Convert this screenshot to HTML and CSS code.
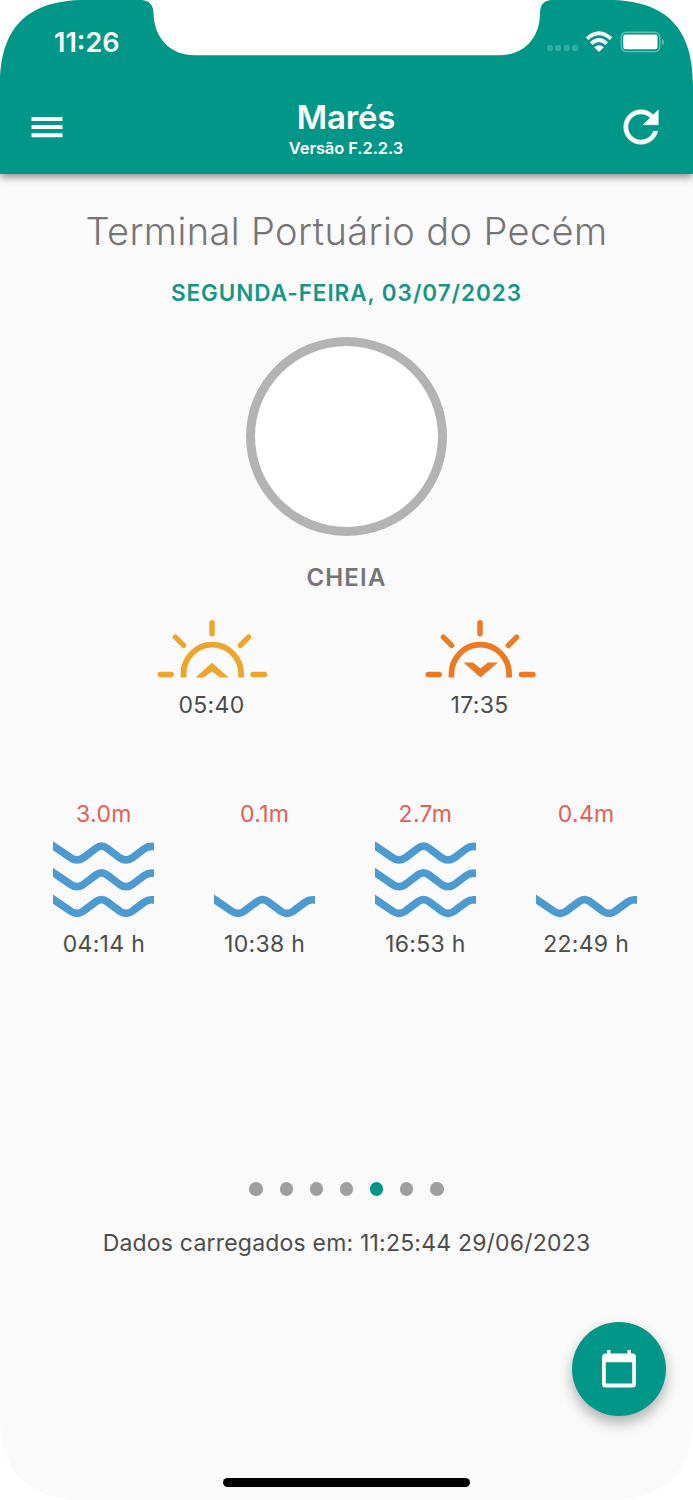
FILE: index.html
```html
<!DOCTYPE html>
<html lang="pt-BR">
<head>
    <meta charset="UTF-8">
    <meta name="viewport" content="width=device-width, initial-scale=1.0">
    <title>Marés</title>
    <link rel="stylesheet" href="styles.css">
</head>
<body>
    <!-- shared wave shape -->
    <svg class="defs" width="0" height="0">
        <defs>
            <path id="wave" d="M-4 2L18 17Q24 20.800 30 17L43 7.200Q48.500 3.200 54 7.200L67 17Q73 20.800 79 17L91 8Q97 3.600 104 6.500" fill="none" stroke="#4b9bd0" stroke-width="7.6"/>
        </defs>
    </svg>

    <div class="phone">
        <header class="app-header">
            <div class="status-bar">
                <span class="clock">11:26</span>
                <div class="status-icons">
                    <span class="signal"><i></i><i></i><i></i><i></i></span>
                    <svg class="wifi" width="28" height="22" viewBox="0 0 28 22">
                        <g fill="none" stroke="#fff" stroke-width="3.8">
                            <path d="M2 7.7Q14 -3.2 26 7.7"/>
                            <path d="M6.3 12.6Q14 5.6 21.7 12.6"/>
                        </g>
                        <path d="M9.2 16.2Q14 12.4 18.8 16.2L14 21Z" fill="#fff"/>
                    </svg>
                    <svg class="battery" width="46" height="22" viewBox="0 0 46 22">
                        <rect x="1.2" y="1.2" width="38.6" height="19.4" rx="5" fill="none" stroke="#66bdb4" stroke-width="1.4"/>
                        <rect x="3.2" y="3.5" width="34.3" height="14.8" rx="2.5" fill="#fff"/>
                        <path d="M42 7.5Q46 11 42 14.5Z" fill="#66bdb4"/>
                    </svg>
                </div>
            </div>
            <div class="toolbar">
                <svg class="menu-icon" width="32" height="22" viewBox="0 0 32 22">
                    <path d="M.5 .9h31v4H.5zM.5 9h31v4H.5zM.5 17.300h31v4H.5z" fill="#fff"/>
                </svg>
                <div class="titles">
                    <h1>Marés</h1>
                    <p class="version">Versão F.2.2.3</p>
                </div>
                <svg class="refresh-icon" width="52" height="52" viewBox="0 0 24 24">
                    <path d="M17.65 6.35C16.2 4.9 14.21 4 12 4c-4.42 0-7.99 3.58-7.99 8s3.57 8 7.99 8c3.73 0 6.84-2.55 7.73-6h-2.08c-.82 2.33-3.04 4-5.65 4-3.31 0-6-2.69-6-6s2.69-6 6-6c1.66 0 3.14.69 4.22 1.78L13 11h7V4l-2.35 2.35z" fill="#fff" stroke="#fff" stroke-width=".2"/>
                </svg>
            </div>
        </header>

        <main class="content">
            <h2 class="port">Terminal Portuário do Pecém</h2>
            <p class="date">SEGUNDA-FEIRA, 03/07/2023</p>
            <div class="moon"></div>
            <p class="moon-phase">CHEIA</p>

            <div class="sun-times">
                <div class="sun sunrise">
                    <svg width="112" height="60" viewBox="0 0 112 60">
                        <g fill="none" stroke="currentColor" stroke-width="5.4" stroke-linecap="round">
                            <path d="M56 3.6V14.8M19.4 18.2l8.2 8.2M92.6 18.2l-8.2 8.2M4.2 55.5h11M97 55.5h11.5"/>
                            <path d="M27.5 58.6V55A28.8 29.3 0 0 1 85.1 55V58.6" stroke-linecap="butt" stroke-width="5.8"/>
                        </g>
                        <path d="M39.5 58.6L56 43.8 72.8 58.6H64.3L56 52.500 47.500 58.6Z" fill="currentColor"/>
                    </svg>
                    <span>05:40</span>
                </div>
                <div class="sun sunset">
                    <svg width="112" height="60" viewBox="0 0 112 60">
                        <g fill="none" stroke="currentColor" stroke-width="5.4" stroke-linecap="round">
                            <path d="M56 3.6V14.8M19.4 18.2l8.2 8.2M92.6 18.2l-8.2 8.2M4.2 55.5h11M97.5 55.5h11.5"/>
                            <path d="M27.5 58.6V55A28.8 29.3 0 0 1 85.1 55V58.6" stroke-linecap="butt" stroke-width="5.8"/>
                        </g>
                        <path d="M39.5 43.5H49L56.5 49.6 64 43.5H74L56.5 58.6Z" fill="currentColor"/>
                    </svg>
                    <span>17:35</span>
                </div>
            </div>

            <div class="tides">
                <div class="tide">
                    <span class="height">3.0m</span>
                    <svg width="101" height="76" viewBox="0 0 101 76"><use href="#wave"/><use href="#wave" y="26.7"/><use href="#wave" y="53.4"/></svg>
                    <span class="hour">04:14 h</span>
                </div>
                <div class="tide">
                    <span class="height">0.1m</span>
                    <svg width="101" height="76" viewBox="0 0 101 76"><use href="#wave" y="53.4"/></svg>
                    <span class="hour">10:38 h</span>
                </div>
                <div class="tide">
                    <span class="height">2.7m</span>
                    <svg width="101" height="76" viewBox="0 0 101 76"><use href="#wave"/><use href="#wave" y="26.7"/><use href="#wave" y="53.4"/></svg>
                    <span class="hour">16:53 h</span>
                </div>
                <div class="tide">
                    <span class="height">0.4m</span>
                    <svg width="101" height="76" viewBox="0 0 101 76"><use href="#wave" y="53.4"/></svg>
                    <span class="hour">22:49 h</span>
                </div>
            </div>

            <div class="dots">
                <i></i><i></i><i></i><i></i><i class="active"></i><i></i><i></i>
            </div>
            <p class="loaded">Dados carregados em: 11:25:44 29/06/2023</p>
        </main>

        <button class="fab" aria-label="Calendário">
            <svg width="36" height="40" viewBox="0 0 36 40">
                <path fill="#fff" fill-rule="evenodd" d="M6 1h3.5v3.6h17V1H30v3.6h1.5A3.5 3.5 0 0 1 35 8v27a3.5 3.5 0 0 1-3.5 3.5h-27A3.5 3.5 0 0 1 1 35V8a3.5 3.5 0 0 1 3.5-3.4H6zM4.8 13.2v21.3h26.4V13.2z"/>
            </svg>
        </button>
        <div class="home-bar"></div>

        <!-- notch and rounded screen corners -->
        <svg class="bezel" width="693" height="1500" viewBox="0 0 693 1500">
            <path fill="#fff" d="M0 0H85C25 0 0 30 0 85ZM693 0V85C693 30 668 0 608 0ZM0 1500V1415C0 1470 25 1500 85 1500ZM693 1500H608C668 1500 693 1470 693 1415Z"/>
            <path fill="#fff" d="M142 0Q153 1 153.5 13C154 38 170 55.3 195 55.3H499C524 55.3 540 38 540 13Q540 1 551 0Z"/>
        </svg>
    </div>
</body>
</html>
```
FILE: styles.css
```css
* {
    box-sizing: border-box;
}

body {
    margin: 0;
    background-color: #fff;
    font-family: 'Inter', sans-serif;
}

h1, h2, p {
    margin: 0;
}

svg {
    display: block;
    flex: none;
}

.defs {
    position: absolute;
}

.phone {
    position: relative;
    width: 693px;
    height: 1500px;
    overflow: hidden;
    background-color: #fafafa;
}

.app-header {
    height: 174px;
    background-color: #009688;
    color: #fff;
    box-shadow: 0 3px 8px rgba(0, 0, 0, 0.45);
}

.status-bar {
    display: flex;
    justify-content: space-between;
    height: 84px;
    padding: 27px 27px 0 54px;
}

.clock {
    font-size: 27px;
    font-weight: 600;
    line-height: 32px;
}

.status-icons {
    display: flex;
    align-items: flex-start;
    padding-top: 4px;
}

.signal {
    display: flex;
    gap: 2.4px;
    margin: 14px 7px 0 0;
}

.signal i {
    width: 6px;
    height: 6px;
    border-radius: 2px;
    background-color: #33aba0;
}

.wifi {
    margin-right: 7px;
}

.toolbar {
    display: grid;
    grid-template-columns: 1fr auto 1fr;
    height: 90px;
    padding: 0 26px 0 31px;
}

.menu-icon {
    margin-top: 32px;
}

.titles {
    padding-top: 13px;
    margin-right: 6px;
    text-align: center;
}

h1 {
    font-size: 33px;
    font-weight: 600;
    line-height: 41px;
    letter-spacing: -0.2px;
}

.version {
    font-size: 16.5px;
    font-weight: 600;
    line-height: 20px;
    letter-spacing: -0.1px;
}

.refresh-icon {
    justify-self: end;
    margin-top: 17px;
}

.content {
    display: flex;
    flex-direction: column;
    align-items: center;
}

.port {
    margin-top: 34px;
    color: #757575;
    font-size: 38px;
    font-weight: 300;
    line-height: 46px;
    letter-spacing: 0.4px;
}

.date {
    margin-top: 25px;
    color: #159686;
    font-size: 22.5px;
    font-weight: 600;
    line-height: 28px;
    letter-spacing: 0.95px;
}

.moon {
    width: 201px;
    height: 199px;
    margin-top: 30px;
    border: 9px solid #b3b3b3;
    border-radius: 50%;
    background-color: #fff;
}

.moon-phase {
    margin-top: 28px;
    color: #757575;
    font-size: 24px;
    font-weight: 600;
    line-height: 28px;
    letter-spacing: 1.2px;
}

.sun-times {
    display: flex;
    gap: 156px;
    margin: 27px 2px 0 0;
}

.sun {
    display: flex;
    flex-direction: column;
    align-items: center;
}

.sunrise {
    color: #eda52b;
}

.sunset {
    color: #ec7a23;
}

.sun span,
.hour {
    color: #4c4c4c;
    font-size: 23px;
    line-height: 28px;
    letter-spacing: 0.3px;
}

.sun span {
    margin-top: 12px;
}

.tides {
    display: grid;
    grid-template-columns: repeat(4, 1fr);
    width: 643px;
    margin: 81px 3px 0 0;
}

.tide {
    display: flex;
    flex-direction: column;
    align-items: center;
}

.height {
    margin-bottom: 13px;
    color: #e85d52;
    font-size: 23px;
    line-height: 28px;
    letter-spacing: 0.3px;
}

.hour {
    margin-top: 13px;
}

.dots {
    display: flex;
    gap: 16.6px;
    margin-top: 224px;
}

.dots i {
    width: 13.5px;
    height: 13.5px;
    border-radius: 50%;
    background-color: #9e9e9e;
}

.dots .active {
    background-color: #009688;
}

.loaded {
    margin-top: 33px;
    color: #4c4c4c;
    font-size: 23px;
    line-height: 28px;
    letter-spacing: 0.2px;
}

.fab {
    position: absolute;
    top: 1322px;
    left: 572px;
    display: flex;
    align-items: center;
    justify-content: center;
    width: 94px;
    height: 94px;
    padding: 0;
    border: 0;
    border-radius: 50%;
    background-color: #009688;
    box-shadow: 0 7px 14px rgba(0, 0, 0, 0.3);
}

.home-bar {
    position: absolute;
    top: 1478px;
    left: 223px;
    width: 247px;
    height: 9px;
    border-radius: 5px;
    background-color: #000;
}

.bezel {
    position: absolute;
    top: 0;
    left: 0;
    pointer-events: none;
}
```
